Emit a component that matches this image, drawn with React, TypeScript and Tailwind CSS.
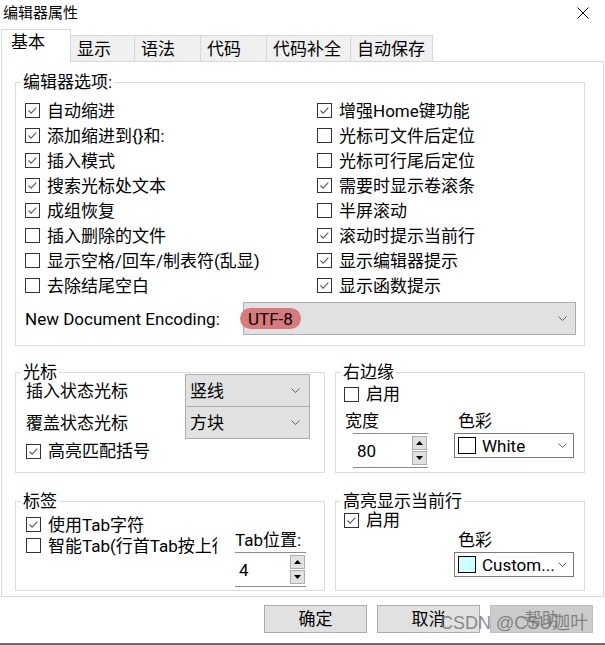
import React from "react";

type Kids = { children?: React.ReactNode; className?: string };

const Check = ({ on }: { on?: boolean }) => (
  <svg width="15" height="15" viewBox="0 0 15 15" className="shrink-0">
    <rect x="0.5" y="0.5" width="14" height="14" fill="#fff" stroke="#333" />
    {on && <path d="M3.5 7.5l2.6 2.6 5.2-5.4" fill="none" stroke="#5a5a5a" strokeWidth="1.1" />}
  </svg>
);

const CheckRow = ({ on, label, className = "" }: { on?: boolean; label: string; className?: string }) => (
  <div className={`flex items-center gap-[7px] whitespace-nowrap ${className}`}>
    <Check on={on} />
    <span>{label}</span>
  </div>
);

const Chevron = () => (
  <svg width="9" height="5" viewBox="0 0 9 5" className="shrink-0">
    <path d="M0.5 0.5l4 4 4-4" fill="none" stroke="#606060" />
  </svg>
);

const SpinBtn = ({ up }: { up?: boolean }) => (
  <div className="w-[15px] h-[14px] bg-[#e1e1e1] border border-[#adadad] flex items-center justify-center">
    <svg width="7" height="4" viewBox="0 0 7 4">
      <path d={up ? "M0 4h7L3.5 0z" : "M0 0h7L3.5 4z"} fill="#000" />
    </svg>
  </div>
);

const Spinner = ({ value, className = "" }: { value: string; className?: string }) => (
  <div className={`flex items-center justify-between border-y border-[#8c8c8c] pl-[4px] pr-[1px] ${className}`}>
    <span>{value}</span>
    <div className="flex flex-col gap-[1px]">
      <SpinBtn up />
      <SpinBtn />
    </div>
  </div>
);

const Select = ({ value, className = "" }: { value: string; className?: string }) => (
  <div className={`flex items-center justify-between bg-[#e1e1e1] border border-[#adadad] pl-[4px] pr-[9px] ${className}`}>
    <span>{value}</span>
    <Chevron />
  </div>
);

const ColorSelect = ({ swatch, value, className = "" }: { swatch: string; value: string; className?: string }) => (
  <div className={`flex items-center justify-between border border-[#7a7a7a] bg-white pr-[6px] ${className}`}>
    <div className="flex items-center">
      <span className={`ml-[3px] w-[18px] h-[17px] border border-black ${swatch}`} />
      <span className="ml-[6px]">{value}</span>
    </div>
    <Chevron />
  </div>
);

const Group = ({ title, className = "", children }: Kids & { title: string }) => (
  <fieldset className={`border border-[#dcdcdc] pl-[5px] min-w-0 ${className}`}>
    <legend className="px-[2px] leading-[20px]">{title}</legend>
    {children}
  </fieldset>
);

const tabs = [
  { name: "基本", w: "w-[70px]" },
  { name: "显示", w: "w-[64px]" },
  { name: "语法", w: "w-[66px]" },
  { name: "代码", w: "w-[66px]" },
  { name: "代码补全", w: "w-[84px]" },
  { name: "自动保存", w: "w-[82px]" },
];

const leftOpts = [
  { on: true, label: "自动缩进" },
  { on: true, label: "添加缩进到{}和:" },
  { on: true, label: "插入模式" },
  { on: true, label: "搜索光标处文本" },
  { on: true, label: "成组恢复" },
  { on: false, label: "插入删除的文件" },
  { on: false, label: "显示空格/回车/制表符(乱显)" },
  { on: false, label: "去除结尾空白" },
];

const rightOpts = [
  { on: true, label: "增强Home键功能" },
  { on: false, label: "光标可文件后定位" },
  { on: false, label: "光标可行尾后定位" },
  { on: true, label: "需要时显示卷滚条" },
  { on: false, label: "半屏滚动" },
  { on: true, label: "滚动时提示当前行" },
  { on: true, label: "显示编辑器提示" },
  { on: true, label: "显示函数提示" },
];

export default function App() {
  return (
    <div className="w-[605px] h-[645px] bg-white flex flex-col text-[17px] leading-[20px] text-black font-['Roboto','Noto_Sans_CJK_SC',sans-serif] overflow-hidden">
      {/* title bar */}
      <div className="h-[30px] shrink-0 flex items-start justify-between pl-[3px] pr-[16px] pt-[3px]">
        <span className="text-[15px]">编辑器属性</span>
        <svg width="12" height="12" viewBox="0 0 12 12" className="mt-[4px]">
          <path d="M0.5 0.5l11 11M11.5 0.5l-11 11" stroke="#000" strokeWidth="1" />
        </svg>
      </div>

      {/* tabs */}
      <div className="h-[31px] shrink-0 flex items-end ml-[1px]">
        {tabs.map((t, i) =>
          i === 0 ? (
            <div
              key={t.name}
              className={`${t.w} h-[33px] -mb-px relative z-10 bg-white border-x border-t border-[#d9d9d9] pl-[9px] pt-[2px]`}
            >
              {t.name}
            </div>
          ) : (
            <div
              key={t.name}
              className={`${t.w} h-[26px] bg-[#f0f0f0] border-t border-r border-[#d9d9d9] pl-[6px] pt-[3px] whitespace-nowrap`}
            >
              {t.name}
            </div>
          )
        )}
      </div>

      {/* panel */}
      <div className="ml-[1px] w-[603px] shrink-0 border border-[#d9d9d9] pl-[13px] pt-[10px] pb-[5px]">
        <Group title="编辑器选项:" className="w-[570px]">
          <div className="grid grid-cols-[292px_1fr] pl-[4px] pt-[6px]">
            <div>
              {leftOpts.map((o) => (
                <CheckRow key={o.label} on={o.on} label={o.label} className="h-[25px]" />
              ))}
            </div>
            <div>
              {rightOpts.map((o) => (
                <CheckRow key={o.label} on={o.on} label={o.label} className="h-[25px] gap-[6px]" />
              ))}
            </div>
          </div>
          <div className="flex items-center pl-[4px] mt-[4px] mb-[10px]">
            <span className="w-[218px] whitespace-nowrap">New Document Encoding:</span>
            <div className="w-[333px] h-[33px] bg-[#e1e1e1] border border-[#adadad] flex items-center justify-between pr-[8px]">
              <span className="-ml-[4px] px-[8px] h-[21px] rounded-full bg-[#d8797c] flex items-center">UTF-8</span>
              <Chevron />
            </div>
          </div>
        </Group>

        <div className="flex gap-[10px] mt-[16px]">
          <Group title="光标" className="w-[310px]">
            <div className="-mt-[8px] pl-[5px] pb-[9px]">
              <div className="flex items-center h-[33px]">
                <span className="w-[159px]">插入状态光标</span>
                <Select value="竖线" className="w-[125px] h-[33px]" />
              </div>
              <div className="flex items-center h-[33px] -mt-px">
                <span className="w-[159px]">覆盖状态光标</span>
                <Select value="方块" className="w-[125px] h-[33px]" />
              </div>
              <CheckRow on label="高亮匹配括号" className="h-[24px]" />
            </div>
          </Group>

          <Group title="右边缘" className="w-[250px]">
            <div className="-mt-[8px] pl-[3px] pb-[4px]">
              <CheckRow label="启用" className="h-[24px] mt-[8px] gap-[6px]" />
              <div className="grid grid-cols-[110px_120px] mt-[4px] items-start">
                <span className="h-[22px] leading-[22px] ml-[1px]">宽度</span>
                <span className="h-[22px] leading-[22px] ml-[4px]">色彩</span>
                <Spinner value="80" className="mt-[1px] ml-[9px] w-[75px] h-[35px]" />
                <ColorSelect swatch="bg-white" value="White" className="mt-[1px] w-[120px] h-[25px]" />
              </div>
            </div>
          </Group>
        </div>

        <div className="flex gap-[10px] mt-[18px]">
          <Group title="标签" className="w-[310px]">
            <div className="flex pb-[3px]">
              <div className="w-[196px] overflow-hidden pl-[5px] pt-[3px]">
                <CheckRow on label="使用Tab字符" className="h-[21px]" />
                <CheckRow label="智能Tab(行首Tab按上行缩进)" className="h-[21px]" />
              </div>
              <div className="ml-[18px] pt-[19px] w-[71px]">
                <div className="h-[20px] whitespace-nowrap">Tab位置:</div>
                <Spinner value="4" className="mt-[2px] w-[71px] h-[35px] pl-[2px]" />
              </div>
            </div>
          </Group>

          <Group title="高亮显示当前行" className="w-[250px]">
            <div className="-mt-[8px] pl-[3px]">
              <CheckRow on label="启用" className="h-[22px] mt-[6px] gap-[6px]" />
              <div className="pl-[110px]">
                <div className="h-[18px] leading-[18px] ml-[4px]">色彩</div>
                <ColorSelect swatch="bg-[#ccffff]" value="Custom..." className="mt-[3px] w-[120px] h-[25px]" />
              </div>
            </div>
          </Group>
        </div>
      </div>

      {/* buttons */}
      <div className="relative flex-1 flex justify-end items-start gap-[10px] pt-[8px] pr-[12px]">
        <button className="w-[103px] h-[28px] bg-[#e1e1e1] border border-[#adadad]">确定</button>
        <button className="w-[103px] h-[28px] bg-[#e1e1e1] border border-[#adadad]">取消</button>
        <button className="w-[103px] h-[28px] bg-[#cccccc] border border-[#bfbfbf] text-[#838383]">帮助</button>
        <span className="absolute left-[440px] top-[16px] text-[18px] leading-[21px] whitespace-nowrap text-[#6e6e6e]/80 font-['Liberation_Sans','Noto_Sans_CJK_SC',sans-serif]">
          CSDN @CSU迦叶
        </span>
      </div>
      <div className="h-[2px] shrink-0 bg-[#6d6d6d]" />
    </div>
  );
}
